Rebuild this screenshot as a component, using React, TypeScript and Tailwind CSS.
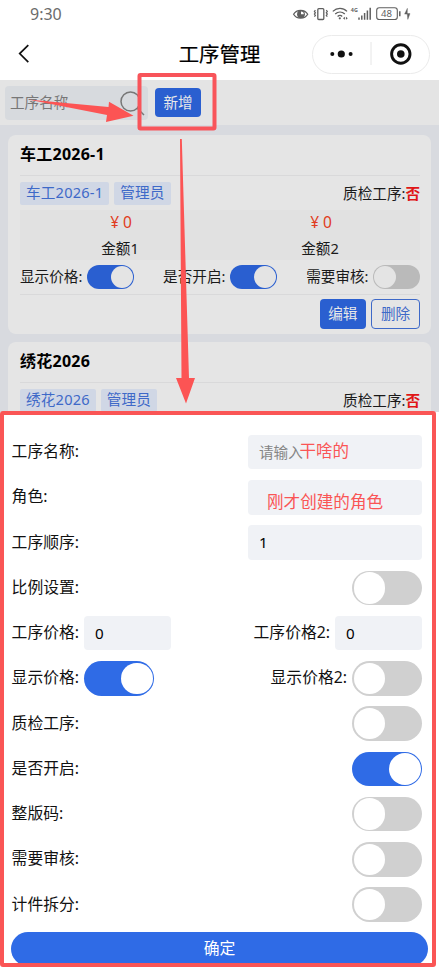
import React, { useState } from 'react';
import clsx from 'clsx';

interface Process {
  name: string;
  role: string;
  amounts: { label: string; value: number }[];
  showPrice: boolean;
  enabled: boolean;
  needReview: boolean;
}

const processes: Process[] = [
  {
    name: '车工2026-1',
    role: '管理员',
    amounts: [{ label: '金额1', value: 0 }, { label: '金额2', value: 0 }],
    showPrice: true,
    enabled: true,
    needReview: false,
  },
  {
    name: '绣花2026',
    role: '管理员',
    amounts: [{ label: '金额1', value: 0 }, { label: '金额2', value: 0 }],
    showPrice: true,
    enabled: true,
    needReview: false,
  },
];

function StatusBar() {
  return (
    <div className="flex h-7 shrink-0 items-center justify-between pl-[30px] pr-[27px]">
      <span className="text-[16px] leading-7 text-[#6b6b6b]">9:30</span>
      <svg width="120" height="20" viewBox="292 4 120 20" fill="none" stroke="#5f5f5f" strokeWidth="1.3">
        <path d="M293.6 14.2C296.5 9 304.8 9 307.7 14.2C304.8 19.4 296.5 19.4 293.6 14.2Z" />
        <circle cx="301" cy="14.2" r="3.9" fill="#5f5f5f" stroke="none" />
        <path d="M301 14.2V11.4A2.8 2.8 0 0 1 303.8 14.2Z" fill="#fff" stroke="none" />
        <rect x="317.8" y="8.7" width="6" height="10.8" rx="1" />
        <path d="M315.4 10.2l-1 1.3 1 1.3-1 1.3 1 1.3-1 1.3M326.3 10.2l1 1.3-1 1.3 1 1.3-1 1.3 1 1.3" strokeWidth="1.2" />
        <path d="M332.8 11.4C337 7.4 343 7.4 347 11.4M335.2 14.1C338 11.5 342 11.5 344.8 14.1M337.6 16.6C339 15.3 341 15.3 342.2 16.4" />
        <circle cx="339.8" cy="18.3" r="1.1" fill="#5f5f5f" stroke="none" />
        <path d="M343 18.2l1.9-1.5v3zM347.8 18.2l-1.9-1.5v3z" fill="#5f5f5f" stroke="none" />
        <text x="350.8" y="12.3" fontSize="6" fontWeight="700" fill="#5f5f5f" stroke="none" textLength="7" lengthAdjust="spacingAndGlyphs">4G</text>
        <path d="M359 17.5v2.2M361.8 15.5v4.2M364.6 13v6.7M367.4 10.4v9.3M370.2 7.8v11.9" strokeWidth="1.5" />
        <rect x="376.7" y="7.7" width="20.6" height="11.8" rx="2.6" strokeWidth="1.1" />
        <text x="386.5" y="17" fontSize="9.6" textAnchor="middle" fill="#5f5f5f" stroke="none">48</text>
        <path d="M399.8 11.2v5" strokeWidth="1.5" />
        <path d="M407.4 8.3l-2.8 5.8h2.6zM407.2 13.6h2.8l-2.2 5.8z" fill="#5f5f5f" stroke="#5f5f5f" strokeWidth=".4" />
      </svg>
    </div>
  );
}

function NavBar() {
  return (
    <header className="grid h-[52px] shrink-0 grid-cols-[1fr_auto_1fr] items-center pl-[17px] pr-[9px]">
      <svg width="14" height="20" viewBox="0 0 14 20" fill="none" stroke="#111" strokeWidth="1.7">
        <path d="M11.3 1.2L2.7 9.6l8.6 8.6" />
      </svg>
      <h1 className="translate-x-[-4px] text-[20.4px] leading-7 text-black [-webkit-text-stroke:0.2px_#000]">工序管理</h1>
      <div className="flex h-[39px] w-[118px] items-center justify-self-end rounded-full border border-[#ebebeb]">
        <svg width="116" height="37" viewBox="0 0 116 37" fill="#111">
          <circle cx="19.3" cy="18" r="2" />
          <circle cx="28.3" cy="18" r="3.6" />
          <circle cx="37.6" cy="18" r="2" />
          <path d="M58 6v23" stroke="#e6e6e6" />
          <circle cx="87.8" cy="18" r="9.2" fill="none" stroke="#111" strokeWidth="2.9" />
          <circle cx="87.8" cy="18" r="3.8" />
        </svg>
      </div>
    </header>
  );
}

interface SwitchProps {
  on: boolean;
  small?: boolean;
  onChange?: () => void;
}

function Switch({ on, small, onChange }: SwitchProps) {
  return (
    <button
      role="switch"
      aria-checked={on}
      onClick={onChange}
      className={clsx(
        'flex shrink-0 items-center rounded-full',
        small ? 'h-[23.5px] w-[46.5px] px-px' : 'h-[34.5px] w-[70px] px-[1.5px]',
        on ? 'justify-end' : 'justify-start',
        small ? (on ? 'bg-[#2a5fd0]' : 'bg-[#bababa]') : on ? 'bg-[#2f6be6]' : 'bg-[#d0d0d0]',
      )}
    >
      <span className={clsx('rounded-full', small ? 'size-[21.5px] bg-[#e4e4e4]' : 'size-[31.5px] bg-white')} />
    </button>
  );
}

function Tag({ children }: { children: React.ReactNode }) {
  return <span className="h-[22.5px] rounded-xs bg-[#d0d7e5] px-1.5 text-[14.6px] leading-[21px] tracking-[0.2px] text-[#3e69c8]">{children}</span>;
}

function ProcessCard({ process }: { process: Process }) {
  const switches = [
    { label: '显示价格:', on: process.showPrice },
    { label: '是否开启:', on: process.enabled },
    { label: '需要审核:', on: process.needReview },
  ];

  return (
    <section className="h-[199px] shrink-0 rounded-lg bg-[#e5e5e5] pl-3 pr-[11px] text-[14.6px] text-[#1a1a1a]">
      <h2 className="h-[41px] border-b border-[#d9d9da] text-[16px] font-bold leading-[39px] tracking-[0.25px] text-black">{process.name}</h2>
      <div className="flex h-[34px] items-center gap-[5px] pt-px">
        <Tag>{process.name}</Tag>
        <Tag>{process.role}</Tag>
        <span className="ml-auto leading-[20px] -translate-y-px">质检工序:<b className="text-[#e01616]">否</b></span>
      </div>
      <div className="grid h-[50px] grid-cols-2 bg-[#e1e1e1] text-center">
        {process.amounts.map((a) => (
          <div key={a.label}>
            <div className="flex h-[25px] justify-center gap-[4px] pl-[2px] text-[15.5px] leading-[25px] text-[#e03b20]">
              <span>¥</span>
              <span>{a.value}</span>
            </div>
            <div className="h-[25px] leading-[26px]">{a.label}</div>
          </div>
        ))}
      </div>
      <div className="flex h-[35px] items-center justify-between border-b border-[#d9d9da]">
        {switches.map((s) => (
          <div key={s.label} className="flex items-center gap-[5px] whitespace-nowrap">
            {s.label}
            <Switch small on={s.on} />
          </div>
        ))}
      </div>
      <div className="flex justify-end gap-[5px] pt-1">
        <button className="h-[30px] w-[46.5px] rounded bg-[#2a5fd0] text-[#e8e8e8]">编辑</button>
        <button className="h-[30px] w-[49px] rounded border-[1.3px] border-[#3e69c8] text-[#3e69c8]">删除</button>
      </div>
    </section>
  );
}

function Row({ label, children }: { label: string; children: React.ReactNode }) {
  return (
    <div className="flex h-[45.25px] items-center justify-between">
      <span>{label}</span>
      {children}
    </div>
  );
}

const inputClass = 'h-[34.5px] rounded bg-[#f0f2f6] pb-px pl-[11px] text-[15.2px] text-black outline-none placeholder:text-[14.6px] placeholder:text-[#858585]';

function ProcessForm() {
  const [form, setForm] = useState<Record<string, boolean>>({ showPrice: true, enabled: true });
  const toggle = (key: string) => setForm({ ...form, [key]: !form[key] });

  const options = [
    { key: 'inspect', label: '质检工序:' },
    { key: 'enabled', label: '是否开启:' },
    { key: 'fullCode', label: '整版码:' },
    { key: 'review', label: '需要审核:' },
    { key: 'split', label: '计件拆分:' },
  ];

  return (
    <div className="flex min-h-0 flex-1 flex-col bg-white px-[11px] pt-[17.4px] text-[15.8px] text-[#111]">
      <div className="pl-[0.6px] pr-[6px]">
        <Row label="工序名称:"><input className={clsx(inputClass, 'w-[174px]')} placeholder="请输入" /></Row>
        <Row label="角色:"><input className={clsx(inputClass, 'w-[174px]')} /></Row>
        <Row label="工序顺序:"><input className={clsx(inputClass, 'w-[174px]')} defaultValue="1" /></Row>
        <Row label="比例设置:"><Switch on={!!form.ratio} onChange={() => toggle('ratio')} /></Row>
        <div className="flex h-[45.25px] items-center justify-between">
          <label className="flex items-center gap-[5px]">工序价格:<input className={clsx(inputClass, 'w-[87px]')} defaultValue="0" /></label>
          <label className="flex items-center gap-[5px]">工序价格2:<input className={clsx(inputClass, 'w-[87px]')} defaultValue="0" /></label>
        </div>
        <div className="flex h-[45.25px] items-center justify-between">
          <div className="flex items-center gap-[5px]">显示价格:<Switch on={!!form.showPrice} onChange={() => toggle('showPrice')} /></div>
          <div className="flex items-center gap-[5px]">显示价格2:<Switch on={!!form.showPrice2} onChange={() => toggle('showPrice2')} /></div>
        </div>
        {options.map((o) => (
          <Row key={o.key} label={o.label}><Switch on={!!form[o.key]} onChange={() => toggle(o.key)} /></Row>
        ))}
      </div>
      <button className="mt-[5px] h-[34px] w-full rounded-full bg-[#2f6be6] text-[15.8px] text-white">确定</button>
    </div>
  );
}

// Tutorial marks drawn over the screen: boxes, arrows and handwritten hints
function Annotations() {
  return (
    <svg className="pointer-events-none absolute left-0 top-0" width="439" height="976" fill="none">
      <rect x="139.5" y="75" width="75" height="53.5" rx="1" stroke="#f8545a" strokeWidth="4" />
      <rect x="2" y="413" width="432" height="552" rx="1" stroke="#fa5555" strokeWidth="4" />
      <path d="M28 99.5L108.5 107L109 101.8L133.5 115.8L106 122L107 115Z" fill="#fc5454" />
      <path d="M180 139H181.8L189 378H195L186 403.5L176 378H181.5Z" fill="#fc5454" />
      <text x="299.5" y="457" fontSize="16.5" fill="#fa5555">干啥的</text>
      <text x="267" y="507.5" fontSize="16.6" fill="#fa5555">刚才创建的角色</text>
    </svg>
  );
}

export default function App() {
  return (
    <div className="relative flex h-[976px] w-[439px] flex-col overflow-hidden bg-white font-['Noto_Sans','Noto_Sans_CJK_SC',sans-serif]">
      <StatusBar />
      <NavBar />
      <main className="flex h-[332px] shrink-0 flex-col overflow-hidden bg-[#d8dadf]">
        <div className="flex h-[45px] shrink-0 items-center gap-[7px] bg-[#e4e4e4] pl-[5px]">
          <div className="flex h-[34px] w-[143px] items-center justify-between rounded bg-[#d7dade] pl-[5px] pr-[3px] text-[14.6px] text-[#777]">
            工序名称
            <svg width="26" height="26" viewBox="0 0 26 26" fill="none" stroke="#777" strokeWidth="1.5">
              <circle cx="11.5" cy="11.5" r="9.5" />
              <path d="M18.3 18.3L25 25" />
            </svg>
          </div>
          <button className="h-[29.5px] w-[46px] rounded bg-[#2a5fd0] text-[14.6px] text-[#e8e8e8]">新增</button>
        </div>
        <div className="flex flex-col gap-[8px] px-2 pt-[10px]">
          {processes.map((p) => <ProcessCard key={p.name} process={p} />)}
        </div>
      </main>
      <ProcessForm />
      <Annotations />
    </div>
  );
}
